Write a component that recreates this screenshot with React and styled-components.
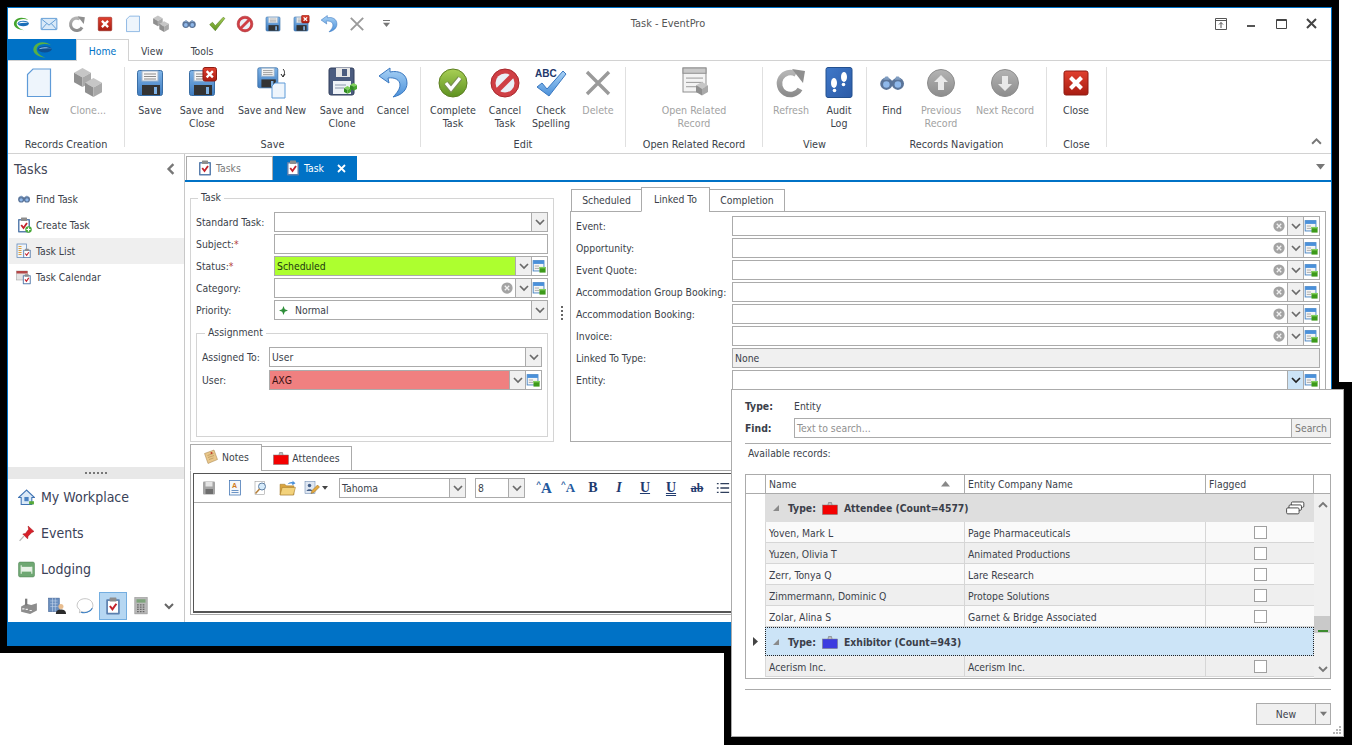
import React from 'react';
import styled, { createGlobalStyle } from 'styled-components';

const BLUE = '#0072c6';
const LINE = '#ababab';
const TEXT = '#3b3f4a';

const Global = createGlobalStyle`
  html, body { margin: 0; background: #fff; }
  body { font: 10.35px "DejaVu Sans Condensed", "DejaVu Sans", sans-serif; font-stretch: condensed; color: ${TEXT}; }
  * { box-sizing: border-box; }
`;

const Desktop = styled.div`
  position: relative;
  width: 1352px;
  height: 745px;
  overflow: hidden;
  background: #fff;
`;
const PopupBackdrop = styled.div`
  position: absolute;
  left: 724px;
  top: 382px;
  width: 628px;
  height: 363px;
  background: #000;
`;
const Frame = styled.div`
  position: absolute;
  left: 0;
  top: 0;
  width: 1339px;
  height: 653px;
  border: 7px solid #000;
  background: ${BLUE};
  padding: 1px 1px 0 1px;
`;
const Window = styled.div`
  display: flex;
  flex-direction: column;
  height: 100%;
  background: #fff;
`;

/* title bar */
const TitleBar = styled.div`
  display: grid;
  grid-template-columns: 1fr auto 1fr;
  align-items: center;
  height: 31px;
  flex: none;
`;
const Qat = styled.div`
  display: flex;
  align-items: center;
  gap: 10px;
  padding-left: 4px;
  svg { display: block; }
`;
const QatMenu = styled.div`
  margin-left: 7px;
  display: flex;
  flex-direction: column;
  gap: 1px;
  &::before { content: ''; width: 7px; height: 1px; background: #777; }
`;
const Title = styled.div`
  color: #555;
  padding-right: 3px;
  font-size: 10.9px;
`;
const WinButtons = styled.div`
  display: flex;
  justify-content: flex-end;
  padding-right: 5px;
`;
const WinButton = styled.div`
  width: 30px;
  display: flex;
  justify-content: center;
`;

/* ribbon */
const RibbonTabs = styled.div`
  display: flex;
  height: 22px;
  flex: none;
  border-bottom: 1px solid #d2d2d2;
`;
const AppButton = styled.div`
  width: 68px;
  background: ${BLUE};
  display: flex;
  align-items: center;
  justify-content: center;
`;
const RibbonTab = styled.div`
  width: ${p => p.$w}px;
  display: flex;
  align-items: center;
  justify-content: center;
  height: 22px;
  padding-top: 1px;
  ${p => p.$active && `
    color: ${BLUE};
    background: #fff;
    border: 1px solid #d2d2d2;
    border-bottom: none;
  `}
`;
const Ribbon = styled.div`
  display: flex;
  height: 93px;
  flex: none;
  padding-top: 6px;
  border-bottom: 1px solid #d2d2d2;
`;
const RibbonGroup = styled.div`
  display: flex;
  flex-direction: column;
  height: 80px;
  padding-left: ${p => p.$pl || 0}px;
  width: ${p => p.$w}px;
  border-right: 1px solid #e0e0e0;
`;
const GroupButtons = styled.div`
  display: flex;
  flex: 1;
`;
const GroupLabel = styled.div`
  height: 14px;
  line-height: 16px;
  margin-bottom: -4px;
  margin-left: -${p => p.$pl || 0}px;
  text-align: center;
  white-space: nowrap;
  font-size: 10.8px;
`;
const BigButton = styled.div`
  width: ${p => p.$w}px;
  flex: none;
  display: flex;
  flex-direction: column;
  align-items: center;
  text-align: center;
  line-height: 13px;
  white-space: pre-line;
  font-size: 10.6px;
  color: ${p => (p.$off ? '#a2a2a2' : TEXT)};
  svg { display: block; margin-bottom: 5px; }
`;
const Collapse = styled.div`
  margin-left: auto;
  align-self: flex-end;
  padding: 0 9px 4px 0;
`;

/* body */
const Body = styled.div`
  display: flex;
  flex: 1;
  min-height: 0;
`;
const Sidebar = styled.div`
  width: 177px;
  flex: none;
  display: flex;
  flex-direction: column;
  border-right: 1px solid #c8c8c8;
`;
const SideHead = styled.div`
  display: flex;
  align-items: center;
  justify-content: space-between;
  height: 30px;
  margin-bottom: 2px;
  padding: 0 7px 0 6px;
  font-size: 14px;
  color: #3f4656;
`;
const SideItem = styled.div`
  display: flex;
  align-items: center;
  gap: 4px;
  height: 26px;
  padding-left: 7px;
  margin: 0 0 0 1px;
  background: ${p => (p.$on ? '#efefef' : 'transparent')};
`;
const Splitter = styled.div`
  margin-top: auto;
  height: 12px;
  background: #e8e8e8;
  display: flex;
  align-items: center;
  justify-content: center;
  gap: 2px;
  i { width: 2px; height: 2px; background: #777; }
`;
const NavItem = styled.div`
  display: flex;
  align-items: center;
  gap: 6px;
  height: 36px;
  padding-left: 10px;
  font-size: 14px;
  color: #3a4258;
`;
const NavIcons = styled.div`
  display: flex;
  padding: 5px 0 0 7px;
  height: 35px;
`;
const NavIcon = styled.div`
  width: 28px;
  height: 28px;
  display: flex;
  align-items: center;
  justify-content: center;
  ${p => p.$on && `background: #b6d7f2; border: 1px solid #74aee0;`}
`;
const Main = styled.div`
  flex: 1;
  min-width: 0;
  display: flex;
  flex-direction: column;
`;
const DocTabs = styled.div`
  display: flex;
  align-items: flex-end;
  height: 28px;
  flex: none;
  padding-left: 1px;
  border-bottom: 2px solid ${BLUE};
`;
const DocTab = styled.div`
  display: flex;
  align-items: center;
  height: 24px;
  width: ${p => p.$w}px;
  padding: 0 0 1px ${p => p.$pl}px;
  gap: 3px;
  color: #7a7a7a;
  background: #fff;
  border: 1px solid #ababab;
  border-bottom: none;
  ${p => p.$on && `
    background: ${BLUE};
    border-color: ${BLUE};
    color: #fff;
  `}
`;
const TabClose = styled.span`
  margin-left: 10px;
  display: flex;
`;
const TabMenu = styled.div`
  margin-left: auto;
  align-self: center;
  padding-right: 6px;
  display: flex;
`;
const Content = styled.div`
  flex: 1;
  padding: 5px 5px 7px 5px;
  display: flex;
  flex-direction: column;
  min-height: 0;
`;
const TopArea = styled.div`
  display: grid;
  grid-template-columns: 364px 16px 756px;
  height: 255px;
  flex: none;
`;
const GroupBox = styled.fieldset`
  margin: ${p => p.$mt || 0}px 0 0 0;
  padding: 7px 5px 0 5px;
  height: ${p => p.$h}px;
  border: 1px solid #d4d4d4;
  min-width: 0;
`;
const Legend = styled.legend`
  margin-left: ${p => p.$ml}px;
  padding: 0 3px;
  height: 14px;
  line-height: 12px;
`;
const FormRows = styled.div`
  display: grid;
  grid-template-columns: ${p => p.$label}px 1fr;
  row-gap: ${p => p.$gap}px;
  align-items: center;
`;
const Label = styled.div`
  white-space: nowrap;
  height: 20px;
  line-height: 20px;
`;
const Req = styled.span`
  color: #b5433a;
`;
const Field = styled.div`
  display: flex;
  flex: ${p => (p.$grow ? 1 : 'initial')};
  height: 20px;
  border: 1px solid ${LINE};
  background: ${p => p.$bg || '#fff'};
  align-items: center;
`;
const FieldText = styled.div`
  flex: 1;
  padding-left: ${p => p.$pl || 2}px;
  color: ${p => p.$color || TEXT};
  display: flex;
  align-items: center;
  gap: 7px;
`;
const FieldButton = styled.div`
  width: 16px;
  height: 18px;
  flex: none;
  display: flex;
  align-items: center;
  justify-content: center;
  border-left: 1px solid ${LINE};
  background: ${p => (p.$hot ? '#cce4f7' : p.$plain ? '#fff' : '#f0f0f0')};
`;
const ClearSlot = styled.div`
  display: flex;
  margin-right: 2px;
`;
const VSplit = styled.div`
  display: flex;
  flex-direction: column;
  align-items: center;
  gap: 2px;
  padding-top: 119px;
  i { width: 2px; height: 2px; background: #666; }
`;
const TabsCol = styled.div`
  display: flex;
  flex-direction: column;
`;
const TabStrip = styled.div`
  display: flex;
  align-items: flex-end;
  padding-left: ${p => p.$pl}px;
  height: ${p => p.$h}px;
  flex: none;
  position: relative;
  z-index: 1;
  margin-bottom: -1px;
`;
const FlatTab = styled.div`
  width: ${p => p.$w}px;
  height: ${p => (p.$on ? p.$h : p.$h - 2)}px;
  display: flex;
  align-items: center;
  justify-content: center;
  gap: 3px;
  padding-bottom: 2px;
  background: #fff;
  border: 1px solid ${LINE};
  border-bottom: ${p => (p.$on ? '1px solid #fff' : `1px solid ${LINE}`)};
  margin-left: -1px;
  &:first-child { margin-left: 0; }
`;
const TabPanel = styled.div`
  border: 1px solid ${LINE};
  padding: 4px 5px 0 5px;
  height: 231px;
`;
const NotesArea = styled.div`
  margin-top: 2px;
  display: flex;
  flex-direction: column;
  flex: 1;
  min-height: 0;
`;
const NotesPanel = styled.div`
  flex: 1;
  border: 1px solid ${LINE};
  padding: 2px 2px 1px 2px;
  min-height: 0;
`;
const Editor = styled.div`
  height: 100%;
  border: 1px solid #555;
  border-width: 1px 1px 2px 1px;
`;
const EditorBar = styled.div`
  display: flex;
  align-items: center;
  height: 29px;
  padding-left: 2px;
  border-bottom: 1px solid ${LINE};
`;
const ToolCell = styled.div`
  width: ${p => p.$w || 26}px;
  flex: none;
  display: flex;
  align-items: center;
  justify-content: center;
  margin-left: ${p => p.$ml || 0}px;
  gap: 2px;
`;
const Glyph = styled.span`
  font: ${p => (p.$i ? 'italic ' : '')}bold ${p => p.$s || 14}px "Liberation Serif", serif;
  color: ${p => p.$c || '#1f3a6e'};
  text-decoration: ${p => p.$d || 'none'};
  text-decoration-style: ${p => p.$ds || 'solid'};
`;
const Caret = styled.span`
  font: bold 8px "Liberation Sans", sans-serif;
  color: #1f5a9e;
  align-self: flex-start;
  margin-right: -2px;
`;
const Combo = styled(Field)`
  width: ${p => p.$w}px;
  margin-left: ${p => p.$ml}px;
  flex: none;
`;

/* status bar */
const StatusBar = styled.div`
  height: 24px;
  flex: none;
  background: ${BLUE};
`;

/* lookup popup */
const Popup = styled.div`
  position: absolute;
  left: 731px;
  top: 389px;
  width: 613px;
  height: 348px;
  background: #fff;
  border: 1px solid ${LINE};
  padding: 6px 12px 0 13px;
  display: flex;
  flex-direction: column;
`;
const PopRow = styled.div`
  display: flex;
  align-items: center;
  height: 20px;
  margin-bottom: 2px;
`;
const PopLabel = styled.div`
  width: 49px;
  font-weight: bold;
  flex: none;
`;
const SearchBtn = styled.div`
  width: 39px;
  flex: none;
  height: 18px;
  line-height: 18px;
  text-align: center;
  color: #777;
  background: #f0f0f0;
  border-left: 1px solid ${LINE};
`;
const Rule = styled.div`
  height: 1px;
  background: ${LINE};
  flex: none;
  margin-top: ${p => p.$mt}px;
`;
const Avail = styled.div`
  margin: 2px 0 0 3px;
  height: 14px;
  line-height: 14px;
`;
const GridFrame = styled.div`
  margin-top: 14px;
  height: 205px;
  flex: none;
  border: 1px solid ${LINE};
  overflow: hidden;
  display: flex;
  flex-direction: column;
`;
const GridHead = styled.div`
  display: grid;
  grid-template-columns: 20px 199px 241px 108px 17px;
  height: 19px;
  flex: none;
  border-bottom: 1px solid ${LINE};
`;
const HeadCell = styled.div`
  display: flex;
  align-items: center;
  justify-content: space-between;
  padding: 0 ${p => p.$pr || 3}px 0 3px;
  border-right: 1px solid ${LINE};
  &:last-child { border-right: none; }
`;
const GridBody = styled.div`
  display: flex;
  flex: 1;
  min-height: 0;
`;
const Rows = styled.div`
  width: 568px;
  flex: none;
`;
const RowWrap = styled.div`
  display: flex;
`;
const Indicator = styled.div`
  width: ${p => (p.$flush ? 19 : 20)}px;
  flex: none;
  display: flex;
  align-items: center;
  justify-content: center;
  border-right: ${p => (p.$flush ? 'none' : '1px solid #d8d8d8')};
`;
const GroupRow = styled.div`
  flex: 1;
  height: ${p => p.$h}px;
  display: flex;
  align-items: center;
  padding: ${p => (p.$sel ? '1px 9px 0 7px' : '0 9px 0 8px')};
  gap: 6px;
  font-weight: bold;
  background: ${p => (p.$sel ? '#cce4f7' : '#dedede')};
  border: ${p => (p.$sel ? '1px dotted #222' : 'none')};
`;
const GroupArrow = styled.span`
  width: 0;
  height: 0;
  border-left: 6px solid transparent;
  border-bottom: 6px solid #8a8a8a;
  margin-right: 3px;
`;
const GroupSpacer = styled.div`
  margin-left: auto;
  display: flex;
`;
const DataRow = styled.div`
  display: grid;
  grid-template-columns: 199px 241px 108px;
  flex: 1;
  height: 21px;
  background: ${p => (p.$alt ? '#efefef' : '#fafafa')};
  border-bottom: 1px solid #d6d6d6;
`;
const DataCell = styled.div`
  display: flex;
  align-items: center;
  justify-content: ${p => (p.$c ? 'center' : 'flex-start')};
  padding: 1px 0 0 ${p => (p.$c ? 0 : 3)}px;
  border-right: 1px solid #d6d6d6;
  white-space: nowrap;
  &:last-child { border-right: none; }
`;
const Check = styled.span`
  width: 13px;
  height: 13px;
  background: #fff;
  border: 1px solid #a0a0a0;
  display: block;
`;
const Scroll = styled.div`
  width: 17px;
  flex: none;
  display: flex;
  flex-direction: column;
  align-items: center;
  background: #f0f0f0;
  padding-top: 6px;
`;
const Thumb = styled.div`
  align-self: stretch;
  height: 17px;
  margin-top: 106px;
  background: #c9c9c9;
  display: flex;
  align-items: flex-end;
  justify-content: center;
`;
const ThumbMark = styled.div`
  width: 10px;
  height: 2px;
  margin-bottom: 1px;
  background: #3d8b2f;
`;
const ScrollEnd = styled.div`
  margin-top: auto;
  padding-bottom: 4px;
  display: flex;
`;
const PopFooter = styled.div`
  display: flex;
  justify-content: flex-end;
  margin-top: 13px;
`;
const SplitBtn = styled.div`
  display: flex;
  width: 75px;
  height: 22px;
  border: 1px solid ${LINE};
  background: #f0f0f0;
`;
const SplitMain = styled.div`
  flex: 1;
  display: flex;
  align-items: center;
  justify-content: center;
  border-right: 1px solid ${LINE};
`;
const SplitArrow = styled.div`
  width: 14px;
  display: flex;
  align-items: center;
  justify-content: center;
`;
const Grip = styled.div`
  position: absolute;
  right: 1px;
  bottom: 1px;
  display: flex;
`;
const Defs = styled.svg`
  position: absolute;
  width: 0;
  height: 0;
`;

/* drawings, all on a 32 unit canvas */
const cube = (x, y, w, c = ['#c6c6c6', '#8f8f8f', '#a9a9a9']) => (
  <>
    <polygon fill={c[0]} points={`${x},${y + w * 0.28} ${x + w * 0.5},${y} ${x + w},${y + w * 0.28} ${x + w * 0.5},${y + w * 0.56}`} />
    <polygon fill={c[1]} points={`${x},${y + w * 0.28} ${x + w * 0.5},${y + w * 0.56} ${x + w * 0.5},${y + w * 1.12} ${x},${y + w * 0.84}`} />
    <polygon fill={c[2]} points={`${x + w},${y + w * 0.28} ${x + w * 0.5},${y + w * 0.56} ${x + w * 0.5},${y + w * 1.12} ${x + w},${y + w * 0.84}`} />
  </>
);
const floppy = (
  <>
    <rect x="3.5" y="3.5" width="25" height="25" rx="2" fill="url(#gBlue)" stroke="#3a6ea5" />
    <rect x="8" y="4" width="16" height="10" fill="#f6f6f6" stroke="#9db4cc" />
    <path d="M10 7h12M10 9.5h12M10 12h12" stroke="#8a8a8a" />
    <rect x="8" y="18" width="18" height="10" fill="#333" />
    <rect x="20" y="20" width="3" height="7" fill="#7fb2e5" />
  </>
);
const redBox = (x, y, s) => {
  const a = s * 0.27;
  const b = s * 0.73;
  return (
    <>
      <rect x={x} y={y} width={s} height={s} rx="2" fill="url(#gRed)" stroke="#8f1b12" />
      <path d={`M${x + a} ${y + a}L${x + b} ${y + b}M${x + b} ${y + a}L${x + a} ${y + b}`} stroke="#fff" strokeWidth={s * 0.17} />
    </>
  );
};
const clipboard = (
  <>
    <rect x="4" y="4" width="24" height="27" rx="1.5" fill="#5a7fae" />
    <rect x="7" y="7" width="18" height="21" fill="#fff" />
    <rect x="10" y="1" width="12" height="7" rx="1" fill="#8d8d8d" />
    <path d="M10.5 16l4.5 6 7-10" fill="none" stroke="#c3212b" strokeWidth="3.6" />
  </>
);
const table = (x, y, w, h) => (
  <>
    <rect x={x} y={y} width={w} height={h} fill="#f3f3f3" stroke="#8f8f8f" />
    <rect x={x} y={y} width={w} height={h * 0.22} fill="#c9c9c9" stroke="#8f8f8f" />
    <path d={`M${x + 3} ${y + h * 0.42}h${w - 6}M${x + 3} ${y + h * 0.6}h${w - 6}M${x + 3} ${y + h * 0.78}h${w - 6}`} stroke="#9a9a9a" />
  </>
);
const ICONS = {
  logo: (
    <>
      <path d="M29 9C22 3 8 3 4 12c-3 8 5 14 17 15C12 24 6 18 9 12c3-5 12-6 20-3z" fill="#45a52e" />
      <ellipse cx="20" cy="15" rx="10" ry="5" fill="#1b6fb8" />
      <path d="M11 15c3-4 12-4 19-1-7-1-13 0-19 1z" fill="#fff" />
    </>
  ),
  logoDark: (
    <>
      <path d="M29 9C22 3 8 3 4 12c-3 8 5 14 17 15C12 24 6 18 9 12c3-5 12-6 20-3z" fill="#58b044" />
      <ellipse cx="20" cy="15" rx="10" ry="4.5" fill="#0d4f91" />
      <path d="M11 15c3-4 12-4 19-1-7-1-13 0-19 1z" fill="#8fc0e8" />
    </>
  ),
  mail: (
    <>
      <rect x="2" y="6" width="28" height="20" rx="1" fill="#d8e9f8" stroke="#4d8fd0" strokeWidth="1.5" />
      <path d="M2.5 7L16 18 29.5 7M3 25l9-10M29 25l-9-10" fill="none" stroke="#4d8fd0" strokeWidth="1.5" />
    </>
  ),
  refresh: (
    <>
      <path d="M25 22A11 11 0 1 1 21 7" fill="none" stroke="url(#gGray)" strokeWidth="5.5" />
      <polygon points="17,2 30,4 28,16" fill="#8f8f8f" />
    </>
  ),
  close: redBox(4, 4, 24),
  page: <path d="M4.5 7.5L10 2h17.5v27.5h-23z" fill="#eef5fc" stroke="#5f9bd8" strokeWidth="1.2" />,
  clone: (
    <>
      {cube(2, 1, 17)}
      {cube(13, 11, 17)}
    </>
  ),
  binoc: (
    <g transform="translate(3 2) scale(.82)">
      <circle cx="9" cy="18" r="7.5" fill="#5a7499" />
      <circle cx="23" cy="18" r="7.5" fill="#5a7499" />
      <rect x="13" y="14" width="6" height="5" fill="#5a7499" />
      <path d="M5 13l3-4h3l2 4zM19 13l2-4h3l3 4z" fill="#7f9cc0" />
      <circle cx="9" cy="19" r="4" fill="#8fb8ea" />
      <circle cx="23" cy="19" r="4" fill="#8fb8ea" />
    </g>
  ),
  tick: <path d="M3 17l5-4 5 6L27 4l3 2-17 22z" fill="url(#gGreen)" stroke="#4f7a1c" />,
  nogo: (
    <>
      <circle cx="16" cy="16" r="14" fill="#cf3f45" stroke="#a8272c" />
      <circle cx="16" cy="16" r="9.5" fill="#eaf0f7" />
      <path d="M8.5 23.5L23.5 8.5" stroke="#cf3f45" strokeWidth="5" />
    </>
  ),
  save: floppy,
  saveClose: (
    <>
      {floppy}
      {redBox(17, 0.5, 13.5)}
    </>
  ),
  saveNew: (
    <>
      <g transform="translate(-1 -2) scale(.8)">{floppy}</g>
      <path d="M16 19l3-3h10v15H16z" fill="#eef5fc" stroke="#5f9bd8" />
      <path d="M27 2c2 2 2 5 0 7M25 7l2 3 2-3" fill="none" stroke="#222" />
    </>
  ),
  saveClone: (
    <>
      <rect x="3" y="1" width="25" height="27" rx="2" fill="#4b5c7f" stroke="#323f5c" />
      <rect x="10" y="1" width="14" height="9" fill="#e6e6e6" />
      <rect x="16" y="2" width="5" height="7" fill="#4b5c7f" />
      <rect x="7" y="14" width="18" height="13" fill="#eef2f7" />
      <path d="M9 18h11M9 21h9" stroke="#8b98ad" />
      {cube(18, 19, 7, ['#7ed05a', '#2f8d1f', '#49a92f'])}
      {cube(24, 16, 7, ['#7ed05a', '#2f8d1f', '#49a92f'])}
    </>
  ),
  undo: (
    <path d="M13 1L2 9l10 7-1-5c7-1 12 2 12 7 0 4-3 8-7 12 9-2 14-7 14-14C30 7 22 3 13 5z" fill="url(#gSky)" stroke="#3a78c0" />
  ),
  x: <path d="M5 5l22 22M27 5L5 27" stroke="#9a9a9a" strokeWidth="3.4" />,
  done: (
    <>
      <circle cx="16" cy="16" r="14" fill="url(#gGreen)" stroke="#5d7f22" />
      <path d="M9 16l5 6 9-11" fill="none" stroke="#7b8f55" strokeWidth="5.5" />
      <path d="M9 16l5 6 9-11" fill="none" stroke="#fff" strokeWidth="3.2" />
    </>
  ),
  spell: (
    <>
      <text x="0" y="10" fontSize="10" fontWeight="bold" fontFamily="Liberation Sans" fill="#22376b">ABC</text>
      <path d="M2 20l5-4 5 6L28 4l3 3-17 22z" fill="url(#gSky)" stroke="#3a78c0" />
    </>
  ),
  related: (
    <>
      {table(5, 1, 23, 24)}
      {cube(18, 15, 12)}
    </>
  ),
  audit: (
    <>
      <rect x="3" y="0.5" width="26" height="30" rx="2" fill="url(#gBook)" stroke="#23508f" />
      <ellipse cx="21" cy="10" rx="3" ry="5" fill="#fff" />
      <circle cx="20.5" cy="17.5" r="1.8" fill="#fff" />
      <ellipse cx="11" cy="16" rx="3" ry="5" fill="#fff" />
      <circle cx="11.5" cy="23.5" r="1.8" fill="#fff" />
    </>
  ),
  up: (
    <>
      <circle cx="16" cy="16" r="13.5" fill="url(#gGray)" stroke="#8d8d8d" />
      <path d="M16 8l7 7h-4v8h-6v-8H9z" fill="#e9e9e9" />
    </>
  ),
  down: (
    <>
      <circle cx="16" cy="16" r="13.5" fill="url(#gGray)" stroke="#8d8d8d" />
      <path d="M16 24L9 17h4V9h6v8h4z" fill="#e9e9e9" />
    </>
  ),
  lookup: (
    <>
      <rect x="2.5" y="3.5" width="23" height="22" fill="#f5f5f5" stroke="#4a86c5" strokeWidth="2" />
      <rect x="2.5" y="3.5" width="23" height="7" fill="#4a90da" />
      <path d="M6 15h9M6 20h9" stroke="#a8a8a8" strokeWidth="2" />
      <rect x="16" y="17" width="13" height="12" fill="#3d9a1a" />
      <rect x="16" y="17" width="13" height="3" fill="#7fd05a" />
    </>
  ),
  clip: clipboard,
  createTask: (
    <>
      {clipboard}
      <circle cx="25" cy="25" r="6.5" fill="#4aa93a" />
      <path d="M25 21v8M21 25h8" stroke="#fff" strokeWidth="2.4" />
    </>
  ),
  taskList: (
    <>
      <rect x="2" y="2" width="19" height="27" fill="#eef3f9" stroke="#5f86b8" strokeWidth="1.5" />
      <path d="M5 7h6M5 11h6M5 15h6M5 19h6M5 23h6" stroke="#e0a13a" strokeWidth="2" />
      <g transform="translate(12 11) scale(.62)">{clipboard}</g>
    </>
  ),
  calendar: (
    <>
      <rect x="1" y="4" width="22" height="18" fill="#e4e4e4" stroke="#9a9a9a" />
      <rect x="1" y="4" width="22" height="5" fill="#b44848" />
      <g transform="translate(11 10) scale(.66)">{clipboard}</g>
    </>
  ),
  home: (
    <>
      <path d="M16 2L1 16h5v13h20V16h5z" fill="#dbe9f7" stroke="#3f73b3" strokeWidth="2" />
      <rect x="12" y="15" width="8" height="8" fill="#4a82c2" />
      <rect x="21" y="23" width="9" height="6" fill="#55a838" />
    </>
  ),
  pin: (
    <>
      <path d="M19 2l11 10-4 2-7 7-1 5-9-9 5-1 6-8z" fill="#d8202a" stroke="#a31319" />
      <path d="M11 21l-8 9" stroke="#b8b8b8" strokeWidth="2.4" />
    </>
  ),
  bed: (
    <>
      <rect x="1" y="2" width="30" height="28" rx="3" fill="#6fa873" stroke="#4d8353" />
      <rect x="6" y="11" width="20" height="9" fill="#e9f2e8" />
      <path d="M6 8v16M26 11v13" stroke="#e9f2e8" strokeWidth="2" />
    </>
  ),
  factory: (
    <>
      <path d="M2 17l9-5 9 2 10-3v13l-12 6-16-4z" fill="#8d8d8d" />
      <rect x="9" y="3" width="4" height="12" fill="#7a7a7a" />
      <path d="M4 21h4M10 22h4M17 24h4" stroke="#eee" strokeWidth="2" />
    </>
  ),
  person: (
    <>
      <rect x="1" y="2" width="19" height="24" fill="#6a8fbf" stroke="#3d5f92" />
      <path d="M4 7h13M4 12h13M4 17h13M8 2v24M13 2v24" stroke="#c7d8ee" />
      <circle cx="23" cy="17" r="4.5" fill="#e8bd8f" />
      <path d="M14 30c0-6 4-8 9-8s9 2 9 8z" fill="#2b2b2b" />
    </>
  ),
  chat: (
    <>
      <path d="M16 3c8 0 14 5 14 12s-6 12-14 12c-2 0-4 0-6-1l-4 2 1-5c-3-2-5-5-5-8C2 8 8 3 16 3z" fill="#fff" stroke="#9a9a9a" />
      <path d="M9 27c6 2 16 1 20-7" fill="none" stroke="#3a7fc4" strokeWidth="2" />
    </>
  ),
  calc: (
    <>
      <rect x="5" y="1" width="22" height="29" fill="#b8b8b8" stroke="#8a8a8a" />
      <rect x="8" y="4" width="16" height="6" fill="#7da37a" />
      <path d="M9 14h14M9 18h14M9 22h14M9 26h14" stroke="#666" strokeWidth="2" strokeDasharray="3 2" />
    </>
  ),
  note: (
    <>
      <path d="M3 9L22 2l7 19-19 8z" fill="#e8c68a" stroke="#a37f45" />
      <path d="M9 13l12-4M10 17l12-4M12 21l9-3" stroke="#a37f45" />
      <circle cx="17" cy="8" r="2" fill="#c0392b" />
    </>
  ),
  badgeRed: (
    <>
      <rect x="1" y="10" width="30" height="19" fill="#f40000" stroke="#777" />
      <path d="M12 10l1-5h6l1 5" fill="#bbb" stroke="#666" />
    </>
  ),
  badgeBlue: (
    <>
      <rect x="1" y="10" width="30" height="19" fill="#3b3be0" stroke="#777" />
      <path d="M12 10l1-5h6l1 5" fill="#bbb" stroke="#666" />
    </>
  ),
  diskGray: (
    <>
      <rect x="4" y="3" width="24" height="26" rx="2" fill="#a4a4a4" />
      <rect x="9" y="4" width="14" height="9" fill="#e4e4e4" />
      <rect x="9" y="18" width="15" height="10" fill="#6e6e6e" />
    </>
  ),
  docA: (
    <>
      <rect x="5" y="1" width="22" height="29" fill="#f4f7fb" stroke="#3f73b3" strokeWidth="1.5" />
      <text x="10" y="16" fontSize="14" fontWeight="bold" fontFamily="Liberation Sans" fill="#d07a1c">A</text>
      <path d="M9 21h14M9 25h14" stroke="#3f73b3" strokeWidth="1.5" />
    </>
  ),
  findDoc: (
    <>
      <rect x="4" y="3" width="19" height="26" fill="#fff" stroke="#8c8c8c" />
      <circle cx="18" cy="13" r="7" fill="#d6ebfb" stroke="#5f7fa3" strokeWidth="2" />
      <path d="M13 18L5 27" stroke="#b5803a" strokeWidth="3" />
    </>
  ),
  folder: (
    <>
      <path d="M2 8h9l3 3h14v17H2z" fill="#d9a53f" stroke="#a1772a" />
      <path d="M6 14h25l-4 14H2z" fill="#f3d27b" stroke="#a1772a" />
      <path d="M16 8c3-4 7-5 10-4l-1-3 6 5-6 4 0-3c-3-1-6 0-9 1z" fill="#4a90da" />
    </>
  ),
  pen: (
    <>
      <rect x="2" y="3" width="20" height="24" fill="#dfe7f2" stroke="#5e7ea8" />
      <circle cx="11" cy="11" r="3.5" fill="#445f88" />
      <path d="M5 22c1-5 11-5 12 0z" fill="#445f88" />
      <path d="M14 27l2-6 11-11 4 4-11 11z" fill="#e5a93f" stroke="#8f6a24" />
    </>
  ),
  list: <path d="M10 6h20M10 16h20M10 26h20M2 6h4M2 16h4M2 26h4" stroke="#2f3f5c" strokeWidth="3" />,
  stack: (
    <>
      <rect x="9" y="5" width="21" height="9" rx="2" fill="#fff" stroke="#444" strokeWidth="1.6" />
      <rect x="5" y="10" width="21" height="9" rx="2" fill="#fff" stroke="#444" strokeWidth="1.6" />
      <rect x="1" y="15" width="21" height="10" rx="2" fill="#fff" stroke="#444" strokeWidth="1.6" />
    </>
  ),
  clear: (
    <>
      <circle cx="16" cy="16" r="15" fill="#a3a3a3" />
      <path d="M10 10l12 12M22 10L10 22" stroke="#f2f2f2" strokeWidth="3.4" />
    </>
  ),
};
const Ico = ({ n, s = 16 }) => (
  <svg width={s} height={s} viewBox="0 0 32 32">{ICONS[n]}</svg>
);
const Chev = ({ dir = 'down', c = '#6a6a6a', w = 1.7, s = 10 }) => {
  const d = { down: 'M1 3l4 4 4-4', up: 'M1 7l4-4 4 4', left: 'M7 1L3 5l4 4' }[dir];
  return (
    <svg width={s} height={s} viewBox="0 0 10 10">
      <path d={d} fill="none" stroke={c} strokeWidth={w} />
    </svg>
  );
};
const Tri = ({ c = '#666', up, w = 9 }) => (
  <svg width={w} height="6" viewBox="0 0 9 6">
    <path d={up ? 'M0 5.5h9L4.5 0z' : 'M0 0h9L4.5 5.5z'} fill={c} />
  </svg>
);

const QAT = ['logo', 'mail', 'refresh', 'close', 'page', 'clone', 'binoc', 'tick', 'nogo', 'save', 'saveClose', 'undo', 'x'];
const GROUPS = [
  { label: 'Records Creation', w: 117, pl: 8, items: [
    ['page', 'New', 46], ['clone', 'Clone...', 52, true],
  ] },
  { label: 'Save', w: 296, items: [
    ['save', 'Save', 50], ['saveClose', 'Save and\nClose', 54], ['saveNew', 'Save and New', 86], ['saveClone', 'Save and\nClone', 54], ['undo', 'Cancel', 48],
  ] },
  { label: 'Edit', w: 205, items: [
    ['done', 'Complete\nTask', 64], ['nogo', 'Cancel\nTask', 40], ['spell', 'Check\nSpelling', 52], ['x', 'Delete', 42, true],
  ] },
  { label: 'Open Related Record', w: 137, items: [
    ['related', 'Open Related\nRecord', 136, true],
  ] },
  { label: 'View', w: 104, items: [
    ['refresh', 'Refresh', 56, true], ['audit', 'Audit\nLog', 40],
  ] },
  { label: 'Records Navigation', w: 180, items: [
    ['binoc', 'Find', 50], ['up', 'Previous\nRecord', 48, true], ['down', 'Next Record', 80, true],
  ] },
  { label: 'Close', w: 60, items: [['close', 'Close', 58]] },
];
const LINKED = ['Event:', 'Opportunity:', 'Event Quote:', 'Accommodation Group Booking:', 'Accommodation Booking:', 'Invoice:'];
const ATTENDEES = [
  ['Yoven, Mark L', 'Page Pharmaceuticals'],
  ['Yuzen, Olivia T', 'Animated Productions'],
  ['Zerr, Tonya Q', 'Lare Research'],
  ['Zimmermann, Dominic Q', 'Protope Solutions'],
  ['Zolar, Alina S', 'Garnet & Bridge Associated'],
];

const Drop = ({ hot }) => (
  <FieldButton $hot={hot}>
    <Chev c={hot ? '#222' : '#6a6a6a'} />
  </FieldButton>
);
const LookupBtn = () => (
  <FieldButton $plain>
    <Ico n="lookup" s={15} />
  </FieldButton>
);
const Clear = () => (
  <ClearSlot>
    <Ico n="clear" s={12} />
  </ClearSlot>
);
const Dots = ({ n }) => Array.from({ length: n }, (_, i) => <i key={i} />);

function Row({ alt, name, company }) {
  return (
    <RowWrap>
      <Indicator />
      <DataRow $alt={alt}>
        <DataCell>{name}</DataCell>
        <DataCell>{company}</DataCell>
        <DataCell $c><Check /></DataCell>
      </DataRow>
    </RowWrap>
  );
}

export default function App() {
  return (
    <Desktop>
      <Global />
      <Defs>
        <defs>
          <linearGradient id="gBlue" x1="0" y1="0" x2="0" y2="1">
            <stop offset="0" stopColor="#7fb4e8" />
            <stop offset="1" stopColor="#3f7cc0" />
          </linearGradient>
          <linearGradient id="gRed" x1="0" y1="0" x2="0" y2="1">
            <stop offset="0" stopColor="#e0402f" />
            <stop offset="1" stopColor="#a81d12" />
          </linearGradient>
          <linearGradient id="gGreen" x1="0" y1="0" x2="0" y2="1">
            <stop offset="0" stopColor="#a8cf55" />
            <stop offset="1" stopColor="#5d9120" />
          </linearGradient>
          <linearGradient id="gGray" x1="0" y1="0" x2="0" y2="1">
            <stop offset="0" stopColor="#b4b4b4" />
            <stop offset="1" stopColor="#8c8c8c" />
          </linearGradient>
          <linearGradient id="gSky" x1="0" y1="0" x2="0" y2="1">
            <stop offset="0" stopColor="#a9d2f5" />
            <stop offset="1" stopColor="#4a90da" />
          </linearGradient>
          <linearGradient id="gBook" x1="0" y1="0" x2="1" y2="1">
            <stop offset="0" stopColor="#3f78c9" />
            <stop offset="1" stopColor="#2c5ba6" />
          </linearGradient>
        </defs>
      </Defs>

      <PopupBackdrop />

      <Frame>
        <Window>
          <TitleBar>
            <Qat>
              {QAT.map(n => <Ico key={n} n={n} s={18} />)}
              <QatMenu><Tri c="#777" w={7} /></QatMenu>
            </Qat>
            <Title>Task - EventPro</Title>
            <WinButtons>
              <WinButton>
                <svg width="14" height="14" viewBox="0 0 14 14">
                  <path d="M1.5 1.5h11v11h-11zM1.5 3.5h11M7 11V5.5M5 7.5l2-2 2 2" fill="none" stroke="#555" />
                </svg>
              </WinButton>
              <WinButton>
                <svg width="10" height="14" viewBox="0 0 10 14"><path d="M1 9h8" stroke="#555" strokeWidth="2" /></svg>
              </WinButton>
              <WinButton>
                <svg width="11" height="14" viewBox="0 0 11 14"><path d="M.5 2.5h10v9H.5zM.5 3.5h10" fill="none" stroke="#444" /></svg>
              </WinButton>
              <WinButton>
                <svg width="11" height="14" viewBox="0 0 11 14"><path d="M1 2l9 9M10 2l-9 9" stroke="#444" strokeWidth="2" /></svg>
              </WinButton>
            </WinButtons>
          </TitleBar>

          <RibbonTabs>
            <AppButton><Ico n="logoDark" s={22} /></AppButton>
            <RibbonTab $w={53} $active>Home</RibbonTab>
            <RibbonTab $w={46}>View</RibbonTab>
            <RibbonTab $w={54}>Tools</RibbonTab>
          </RibbonTabs>

          <Ribbon>
            {GROUPS.map(g => (
              <RibbonGroup key={g.label} $w={g.w} $pl={g.pl}>
                <GroupButtons>
                  {g.items.map(([icon, text, w, off]) => (
                    <BigButton key={text} $w={w} $off={off}>
                      <Ico n={icon} s={32} />
                      {text}
                    </BigButton>
                  ))}
                </GroupButtons>
                <GroupLabel $pl={g.pl}>{g.label}</GroupLabel>
              </RibbonGroup>
            ))}
            <Collapse><Chev dir="up" c="#777" w={1.8} s={11} /></Collapse>
          </Ribbon>

          <Body>
            <Sidebar>
              <SideHead>
                Tasks
                <Chev dir="left" c="#777" w={2} s={12} />
              </SideHead>
              <SideItem><Ico n="binoc" s={16} />Find Task</SideItem>
              <SideItem><Ico n="createTask" s={16} />Create Task</SideItem>
              <SideItem $on><Ico n="taskList" s={16} />Task List</SideItem>
              <SideItem><Ico n="calendar" s={16} />Task Calendar</SideItem>
              <Splitter><Dots n={6} /></Splitter>
              <NavItem><Ico n="home" s={17} />My Workplace</NavItem>
              <NavItem><Ico n="pin" s={17} />Events</NavItem>
              <NavItem><Ico n="bed" s={17} />Lodging</NavItem>
              <NavIcons>
                <NavIcon><Ico n="factory" s={18} /></NavIcon>
                <NavIcon><Ico n="person" s={18} /></NavIcon>
                <NavIcon><Ico n="chat" s={18} /></NavIcon>
                <NavIcon $on><Ico n="clip" s={18} /></NavIcon>
                <NavIcon><Ico n="calc" s={18} /></NavIcon>
                <NavIcon><Chev c="#666" w={2} /></NavIcon>
              </NavIcons>
            </Sidebar>

            <Main>
              <DocTabs>
                <DocTab $w={87} $pl={10}><Ico n="clip" s={16} />Tasks</DocTab>
                <DocTab $w={84} $pl={11} $on>
                  <Ico n="clip" s={16} />Task
                  <TabClose>
                    <svg width="9" height="9" viewBox="0 0 9 9"><path d="M1 1l7 7M8 1L1 8" stroke="#fff" strokeWidth="1.8" /></svg>
                  </TabClose>
                </DocTab>
                <TabMenu><Tri c="#777" /></TabMenu>
              </DocTabs>

              <Content>
                <TopArea>
                  <GroupBox $mt={4} $h={251}>
                    <Legend $ml={2}>Task</Legend>
                    <FormRows $label={78} $gap={2}>
                      <Label>Standard Task:</Label>
                      <Field><FieldText /><Drop /></Field>
                      <Label>Subject:<Req>*</Req></Label>
                      <Field />
                      <Label>Status:<Req>*</Req></Label>
                      <Field $bg="#adff2f"><FieldText $color="#1c3a10">Scheduled</FieldText><Drop /><LookupBtn /></Field>
                      <Label>Category:</Label>
                      <Field><FieldText /><Clear /><Drop /><LookupBtn /></Field>
                      <Label>Priority:</Label>
                      <Field>
                        <FieldText $pl={4}>
                          <svg width="9" height="9" viewBox="0 0 11 11"><path d="M5.5 0l1.6 3.9L11 5.5 7.1 7.1 5.5 11 3.9 7.1 0 5.5l3.9-1.6z" fill="#2f8f3a" /></svg>
                          <span>Normal</span>
                        </FieldText>
                        <Drop />
                      </Field>
                    </FormRows>
                    <GroupBox $mt={6} $h={111}>
                      <Legend $ml={3}>Assignment</Legend>
                      <FormRows $label={67} $gap={3}>
                        <Label>Assigned To:</Label>
                        <Field><FieldText>User</FieldText><Drop /></Field>
                        <Label>User:</Label>
                        <Field $bg="#f08080"><FieldText $color="#3a1010">AXG</FieldText><Drop /><LookupBtn /></Field>
                      </FormRows>
                    </GroupBox>
                  </GroupBox>

                  <VSplit><Dots n={4} /></VSplit>

                  <TabsCol>
                    <TabStrip $pl={1} $h={25}>
                      <FlatTab $w={71} $h={25}>Scheduled</FlatTab>
                      <FlatTab $w={69} $h={25} $on>Linked To</FlatTab>
                      <FlatTab $w={76} $h={25}>Completion</FlatTab>
                    </TabStrip>
                    <TabPanel>
                      <FormRows $label={156} $gap={2}>
                        {LINKED.map(l => (
                          <React.Fragment key={l}>
                            <Label>{l}</Label>
                            <Field><FieldText /><Clear /><Drop /><LookupBtn /></Field>
                          </React.Fragment>
                        ))}
                        <Label>Linked To Type:</Label>
                        <Field $bg="#f0f0f0"><FieldText>None</FieldText></Field>
                        <Label>Entity:</Label>
                        <Field><FieldText /><Drop hot /><LookupBtn /></Field>
                      </FormRows>
                    </TabPanel>
                  </TabsCol>
                </TopArea>

                <NotesArea>
                  <TabStrip $pl={0} $h={27}>
                    <FlatTab $w={72} $h={27} $on><Ico n="note" s={16} />Notes</FlatTab>
                    <FlatTab $w={91} $h={27}><Ico n="badgeRed" s={16} />Attendees</FlatTab>
                  </TabStrip>
                  <NotesPanel>
                    <Editor>
                      <EditorBar>
                        <ToolCell><Ico n="diskGray" s={16} /></ToolCell>
                        <ToolCell><Ico n="docA" s={16} /></ToolCell>
                        <ToolCell><Ico n="findDoc" s={16} /></ToolCell>
                        <ToolCell><Ico n="folder" s={17} /></ToolCell>
                        <ToolCell $w={32}><Ico n="pen" s={16} /><Tri c="#444" w={6} /></ToolCell>
                        <Combo $w={127} $ml={7}><FieldText>Tahoma</FieldText><Drop /></Combo>
                        <Combo $w={50} $ml={9}><FieldText>8</FieldText><Drop /></Combo>
                        <ToolCell $w={24} $ml={7}><Caret>^</Caret><Glyph $s={15} $c="#1f5a9e">A</Glyph></ToolCell>
                        <ToolCell $w={24}><Caret>^</Caret><Glyph $s={13} $c="#1f5a9e">A</Glyph></ToolCell>
                        <ToolCell><Glyph>B</Glyph></ToolCell>
                        <ToolCell><Glyph $i>I</Glyph></ToolCell>
                        <ToolCell><Glyph $d="underline">U</Glyph></ToolCell>
                        <ToolCell><Glyph $d="underline" $ds="double">U</Glyph></ToolCell>
                        <ToolCell><Glyph $s={12} $d="line-through">ab</Glyph></ToolCell>
                        <ToolCell><Ico n="list" s={14} /></ToolCell>
                      </EditorBar>
                    </Editor>
                  </NotesPanel>
                </NotesArea>
              </Content>
            </Main>
          </Body>

          <StatusBar />
        </Window>
      </Frame>

      <Popup>
        <PopRow>
          <PopLabel>Type:</PopLabel>
          <span>Entity</span>
        </PopRow>
        <PopRow>
          <PopLabel>Find:</PopLabel>
          <Field $grow>
            <FieldText $color="#8f8f8f">Text to search...</FieldText>
            <SearchBtn>Search</SearchBtn>
          </Field>
        </PopRow>
        <Rule $mt={3} />
        <Avail>Available records:</Avail>
        <GridFrame>
          <GridHead>
            <HeadCell />
            <HeadCell $pr={14}>Name<Tri c="#888" up /></HeadCell>
            <HeadCell>Entity Company Name</HeadCell>
            <HeadCell>Flagged</HeadCell>
            <HeadCell />
          </GridHead>
          <GridBody>
            <Rows>
              <RowWrap>
                <Indicator $flush />
                <GroupRow $h={28}>
                  <GroupArrow />
                  Type:
                  <Ico n="badgeRed" s={16} />
                  Attendee (Count=4577)
                  <GroupSpacer><Ico n="stack" s={19} /></GroupSpacer>
                </GroupRow>
              </RowWrap>
              {ATTENDEES.map((a, i) => (
                <Row key={a[0]} alt={i % 2 === 1} name={a[0]} company={a[1]} />
              ))}
              <RowWrap>
                <Indicator $flush>
                  <svg width="5" height="9" viewBox="0 0 5 9"><path d="M0 0l5 4.5L0 9z" fill="#444" /></svg>
                </Indicator>
                <GroupRow $h={29} $sel>
                  <GroupArrow />
                  Type:
                  <Ico n="badgeBlue" s={16} />
                  Exhibitor (Count=943)
                </GroupRow>
              </RowWrap>
              <Row alt name="Acerism Inc." company="Acerism Inc." />
            </Rows>
            <Scroll>
              <Chev dir="up" c="#777" w={1.8} />
              <Thumb><ThumbMark /></Thumb>
              <ScrollEnd><Chev c="#777" w={1.8} /></ScrollEnd>
            </Scroll>
          </GridBody>
        </GridFrame>
        <Rule $mt={10} />
        <PopFooter>
          <SplitBtn>
            <SplitMain>New</SplitMain>
            <SplitArrow><Tri c="#777" w={7} /></SplitArrow>
          </SplitBtn>
        </PopFooter>
        <Grip>
          <svg width="10" height="10" viewBox="0 0 10 10">
            <path d="M7 1h2v2H7zM4 4h2v2H4zM7 4h2v2H7zM1 7h2v2H1zM4 7h2v2H4zM7 7h2v2H7z" fill="#b5b5b5" />
          </svg>
        </Grip>
      </Popup>
    </Desktop>
  );
}
